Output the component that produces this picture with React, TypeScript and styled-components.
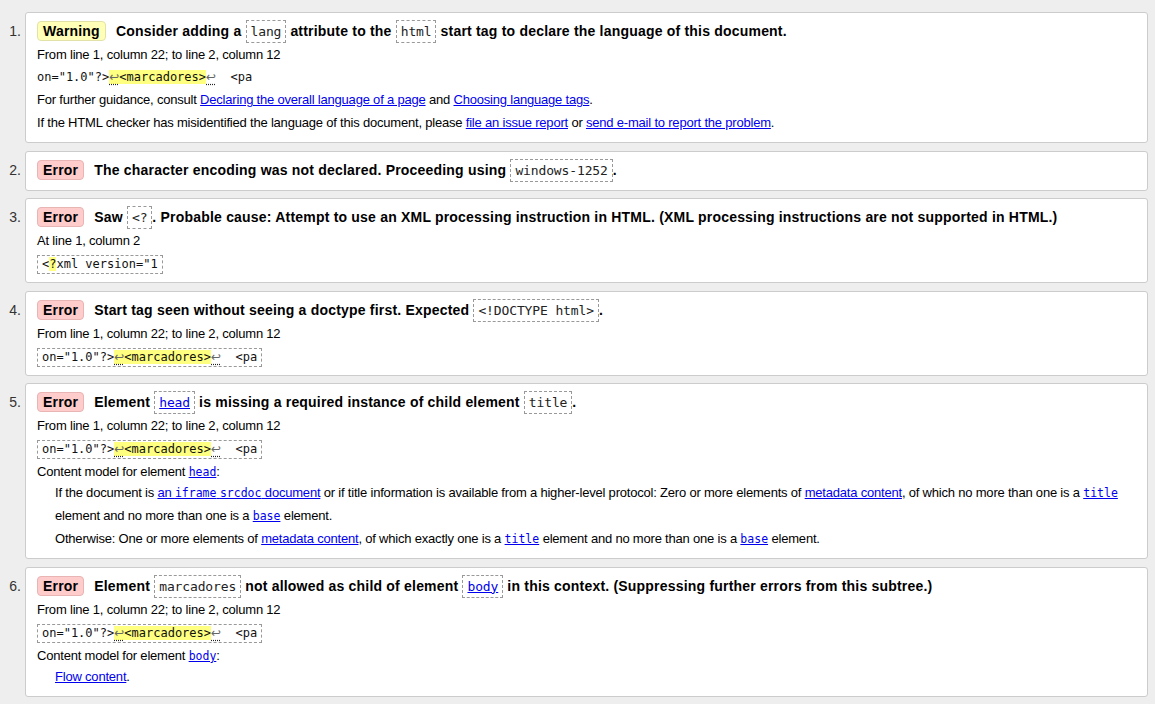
import React from "react";
import styled, { createGlobalStyle } from "styled-components";

const GlobalStyle = createGlobalStyle`
  html, body { margin: 0; padding: 0; }
  body {
    background: #eee;
    font-family: "Liberation Sans", Arial, sans-serif;
    font-size: 13px;
    letter-spacing: -0.2px;
    color: #000;
  }
`;

const mono = `"DejaVu Sans Mono", "Liberation Mono", monospace`;

const Results = styled.ol`
  list-style: none;
  margin: 0;
  padding: 12px 7px 8px 0;
  display: flex;
  flex-direction: column;
  gap: 7.5px;
`;

const Item = styled.li`
  display: flex;
  align-items: flex-start;
`;

const Marker = styled.span`
  flex: 0 0 25px;
  box-sizing: border-box;
  padding: 8px 4px 0 0;
  text-align: right;
  line-height: 23px;
  font-size: 14px;
  letter-spacing: 0;
  color: #333;
`;

const Card = styled.div`
  flex: 1;
  min-width: 0;
  background: #fff;
  border: 1px solid #ccc;
  border-radius: 3px;
  padding: 7px 10px 8px 11px;
`;

const Title = styled.p`
  margin: 0;
  font-size: 14px;
  font-weight: bold;
  letter-spacing: 0.2px;
  line-height: 23px;
  white-space: nowrap;
`;

const Badge = styled.span<{ $kind: "warning" | "error" }>`
  display: inline-block;
  vertical-align: top;
  margin: 1px 10px 0 0;
  padding: 0 5px;
  line-height: 18px;
  border-radius: 4px;
  border: 1px solid ${({ $kind }) => ($kind === "warning" ? "#e2e2a8" : "#e8b4b4")};
  background: ${({ $kind }) => ($kind === "warning" ? "#ffffb8" : "#ffcccc")};
`;

const Code = styled.code`
  font-family: ${mono};
  font-weight: normal;
  font-size: 13px;
  letter-spacing: -0.13px;
  padding: 3px 4px;
  border: 1px dashed #999;
  color: #222;
`;

const Line = styled.p`
  margin: 0;
  line-height: 23px;
`;

const Extract = styled.p<{ $boxed?: boolean }>`
  margin: ${({ $boxed }) => ($boxed ? "3px 0 0" : "0")};
  width: fit-content;
  padding: ${({ $boxed }) => ($boxed ? "0 4px" : "0")};
  border: ${({ $boxed }) => ($boxed ? "1px dashed #999" : "none")};
  font-family: ${mono};
  font-size: 12px;
  letter-spacing: 0;
  line-height: ${({ $boxed }) => ($boxed ? "17px" : "22px")};
  white-space: pre;
  color: #111;
`;

const Mark = styled.mark`
  background: #ffff80;
  color: inherit;
`;

const Lf = styled.span`
  font-family: "DejaVu Sans", sans-serif;
  color: #666;
  text-decoration: underline dotted #222;
  text-underline-offset: 3px;
`;

const Link = styled.a`
  color: #00e;
  text-decoration: underline;
`;

const LinkCode = styled.code`
  font-family: ${mono};
  font-size: 11.5px;
  letter-spacing: 0;
  line-height: 1;
`;

const Model = styled.dl`
  margin: 4px 0 0;
`;

const ModelTitle = styled.dt`
  line-height: 18px;
`;

const ModelBody = styled.dd`
  margin: 0 0 0 18px;
  line-height: 23px;
`;

function Snippet({ boxed = true }: { boxed?: boolean }) {
  return (
    <Extract $boxed={boxed}>
      on="1.0"?&gt;
      <Mark>
        <Lf>↩</Lf>&lt;marcadores&gt;
      </Mark>
      <Lf>↩</Lf>
      {"  <pa"}
    </Extract>
  );
}

const FROM = "From line 1, column 22; to line 2, column 12";

export default function App() {
  return (
    <>
      <GlobalStyle />
      <Results>
        <Item>
          <Marker>1.</Marker>
          <Card>
            <Title>
              <Badge $kind="warning">Warning</Badge>Consider adding a <Code>lang</Code> attribute to the{" "}
              <Code>html</Code> start tag to declare the language of this document.
            </Title>
            <Line>{FROM}</Line>
            <Snippet boxed={false} />
            <Line>
              For further guidance, consult <Link href="#">Declaring the overall language of a page</Link> and{" "}
              <Link href="#">Choosing language tags</Link>.
            </Line>
            <Line>
              If the HTML checker has misidentified the language of this document, please{" "}
              <Link href="#">file an issue report</Link> or <Link href="#">send e-mail to report the problem</Link>.
            </Line>
          </Card>
        </Item>

        <Item>
          <Marker>2.</Marker>
          <Card>
            <Title>
              <Badge $kind="error">Error</Badge>The character encoding was not declared. Proceeding using{" "}
              <Code>windows-1252</Code>.
            </Title>
          </Card>
        </Item>

        <Item>
          <Marker>3.</Marker>
          <Card>
            <Title>
              <Badge $kind="error">Error</Badge>Saw <Code>&lt;?</Code>. Probable cause: Attempt to use an XML
              processing instruction in HTML. (XML processing instructions are not supported in HTML.)
            </Title>
            <Line>At line 1, column 2</Line>
            <Extract $boxed>
              &lt;<Mark>?</Mark>xml version="1
            </Extract>
          </Card>
        </Item>

        <Item>
          <Marker>4.</Marker>
          <Card>
            <Title>
              <Badge $kind="error">Error</Badge>Start tag seen without seeing a doctype first. Expected{" "}
              <Code>&lt;!DOCTYPE html&gt;</Code>.
            </Title>
            <Line>{FROM}</Line>
            <Snippet />
          </Card>
        </Item>

        <Item>
          <Marker>5.</Marker>
          <Card>
            <Title>
              <Badge $kind="error">Error</Badge>Element{" "}
              <Code>
                <Link href="#">head</Link>
              </Code>{" "}
              is missing a required instance of child element <Code>title</Code>.
            </Title>
            <Line>{FROM}</Line>
            <Snippet />
            <Model>
              <ModelTitle>
                Content model for element{" "}
                <Link href="#">
                  <LinkCode>head</LinkCode>
                </Link>
                :
              </ModelTitle>
              <ModelBody>
                If the document is{" "}
                <Link href="#">
                  an <LinkCode>iframe</LinkCode> <LinkCode>srcdoc</LinkCode> document
                </Link>{" "}
                or if title information is available from a higher-level protocol: Zero or more elements of{" "}
                <Link href="#">metadata content</Link>, of which no more than one is a{" "}
                <Link href="#">
                  <LinkCode>title</LinkCode>
                </Link>{" "}
                element and no more than one is a{" "}
                <Link href="#">
                  <LinkCode>base</LinkCode>
                </Link>{" "}
                element.
              </ModelBody>
              <ModelBody>
                Otherwise: One or more elements of <Link href="#">metadata content</Link>, of which exactly one is a{" "}
                <Link href="#">
                  <LinkCode>title</LinkCode>
                </Link>{" "}
                element and no more than one is a{" "}
                <Link href="#">
                  <LinkCode>base</LinkCode>
                </Link>{" "}
                element.
              </ModelBody>
            </Model>
          </Card>
        </Item>

        <Item>
          <Marker>6.</Marker>
          <Card>
            <Title>
              <Badge $kind="error">Error</Badge>Element <Code>marcadores</Code> not allowed as child of element{" "}
              <Code>
                <Link href="#">body</Link>
              </Code>{" "}
              in this context. (Suppressing further errors from this subtree.)
            </Title>
            <Line>{FROM}</Line>
            <Snippet />
            <Model>
              <ModelTitle>
                Content model for element{" "}
                <Link href="#">
                  <LinkCode>body</LinkCode>
                </Link>
                :
              </ModelTitle>
              <ModelBody>
                <Link href="#">Flow content</Link>.
              </ModelBody>
            </Model>
          </Card>
        </Item>
      </Results>
    </>
  );
}
